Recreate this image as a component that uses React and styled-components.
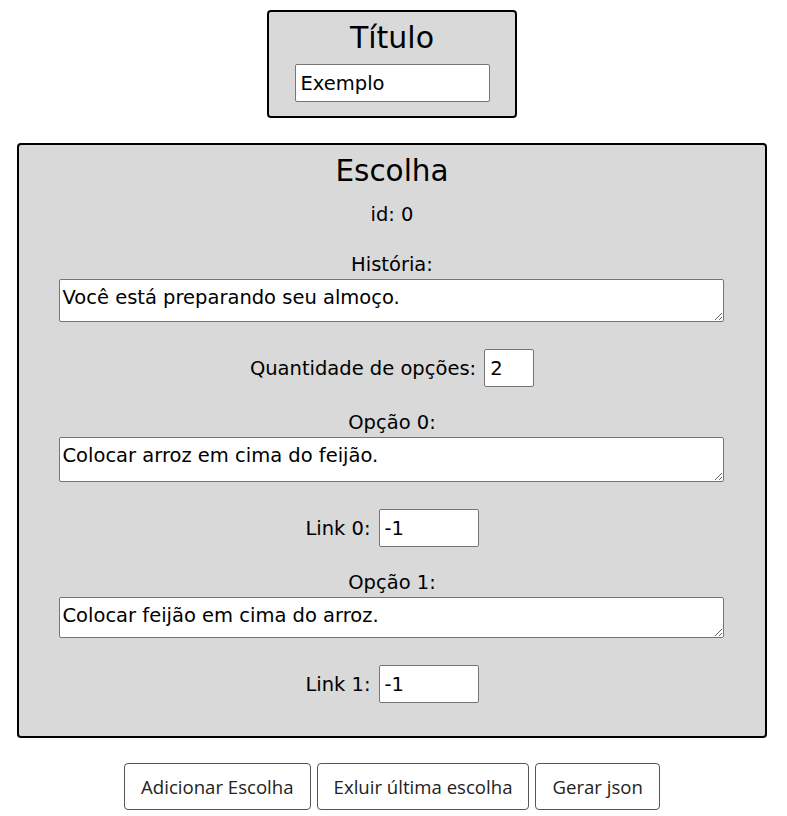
import React from "react";
import styled, { createGlobalStyle } from "styled-components";

const GlobalStyle = createGlobalStyle`
  body {
    margin: 0;
    background: #ffffff;
    font-family: "DejaVu Sans", sans-serif;
    color: #000;
  }
`;

const Page = styled.div`
  display: flex;
  flex-direction: column;
  align-items: center;
  padding: 10px 3px 0 0;
`;

const TitleCard = styled.div`
  width: 250px;
  box-sizing: border-box;
  border: 2px solid #000;
  border-radius: 4px;
  background-color: #d9d9d9;
  display: flex;
  flex-direction: column;
  align-items: center;
  padding: 6px 0 14px;
  h1 {
    margin: 0 0 6px;
    font-weight: 400;
    font-size: 30px;
    line-height: 40px;
  }
`;

const TextInput = styled.input`
  box-sizing: border-box;
  width: ${(p) => p.$w || 100}px;
  height: 38px;
  border: 1px solid #767676;
  border-radius: 2px;
  background: #fff;
  padding: 0 5px;
  font-family: "DejaVu Sans", sans-serif;
  font-size: 19.5px;
  color: #000;
`;

const ChoiceCard = styled.div`
  margin-top: 25px;
  width: 750px;
  box-sizing: border-box;
  border: 2px solid #000;
  border-radius: 4px;
  background-color: #d9d9d9;
  display: flex;
  flex-direction: column;
  align-items: center;
  padding: 9px 0 33px;
  h2 {
    margin: 0;
    font-weight: 400;
    font-size: 29.5px;
    line-height: 34px;
  }
`;

const Label = styled.div`
  font-size: 19.5px;
  line-height: 22px;
  margin-top: ${(p) => p.$mt || 0}px;
`;

const Area = styled.textarea`
  box-sizing: border-box;
  width: 665px;
  height: ${(p) => p.$h || 43}px;
  margin: 3px 0 0 -2px;
  border: 1px solid #767676;
  border-radius: 2px;
  background: #fff;
  padding: 6px 3px 2px;
  font-family: "DejaVu Sans", sans-serif;
  font-size: 19.5px;
  line-height: 24px;
  color: #000;
  resize: vertical;
`;

const Row = styled.div`
  display: flex;
  align-items: center;
  gap: 8px;
  margin-top: 27px;
  font-size: 19.5px;
`;

const Buttons = styled.div`
  display: flex;
  gap: 6px;
  margin-top: 25px;
`;

const Button = styled.button`
  height: 47px;
  padding: 0 16px;
  background: #fff;
  border: 1px solid #555;
  border-radius: 4px;
  font-family: "Open Sans", "Noto Sans", sans-serif;
  font-size: 18.6px;
  color: #222;
`;

const options = [
  { text: "Colocar arroz em cima do feijão.", h: 45 },
  { text: "Colocar feijão em cima do arroz.", h: 41 },
];

export default function App() {
  return (
    <Page>
      <GlobalStyle />
      <TitleCard>
        <h1>Título</h1>
        <TextInput $w={195} defaultValue="Exemplo" />
      </TitleCard>
      <ChoiceCard>
        <h2>Escolha</h2>
        <Label $mt={16}>id: 0</Label>
        <Label $mt={28}>História:</Label>
        <Area defaultValue="Você está preparando seu almoço." />
        <Row>
          <span>Quantidade de opções:</span>
          <TextInput $w={50} defaultValue="2" />
        </Row>
        {options.map((o, i) => (
          <React.Fragment key={i}>
            <Label $mt={25}>Opção {i}:</Label>
            <Area $h={o.h} defaultValue={o.text} />
            <Row>
              <span>Link {i}:</span>
              <TextInput $w={100} defaultValue="-1" />
            </Row>
          </React.Fragment>
        ))}
      </ChoiceCard>
      <Buttons>
        <Button>Adicionar Escolha</Button>
        <Button>Exluir última escolha</Button>
        <Button>Gerar json</Button>
      </Buttons>
    </Page>
  );
}
